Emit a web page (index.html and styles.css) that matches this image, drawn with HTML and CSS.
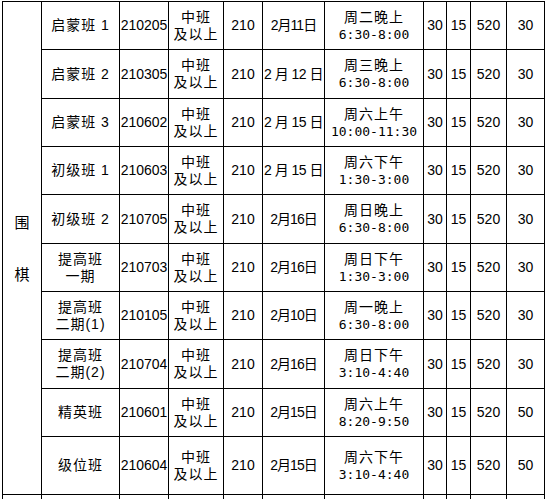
FILE: index.html
```html
<!DOCTYPE html>
<html lang="zh-CN">
<head>
<meta charset="utf-8">
<title>围棋课程</title>
<link rel="stylesheet" href="styles.css">
</head>
<body>
<table class="sched">
  <colgroup>
    <col class="c1"><col class="c2"><col class="c3"><col class="c4"><col class="c5"><col class="c6"><col class="c7"><col class="c8"><col class="c9"><col class="c10"><col class="c11">
  </colgroup>
  <tbody>
    <tr class="h48">
      <td rowspan="10" class="subj">围<br>棋</td>
      <td class="cn">启蒙班 1</td><td>210205</td><td class="cn">中班<br>及以上</td><td>210</td><td class="dt">2月11日</td><td class="tm"><span class="cn">周二晚上</span><br><span class="mono">6:30-8:00</span></td><td>30</td><td>15</td><td>520</td><td>30</td>
    </tr>
    <tr class="h49">
      <td class="cn">启蒙班 2</td><td>210305</td><td class="cn">中班<br>及以上</td><td>210</td><td class="dts">2 月 12 日</td><td class="tm"><span class="cn">周三晚上</span><br><span class="mono">6:30-8:00</span></td><td>30</td><td>15</td><td>520</td><td>30</td>
    </tr>
    <tr class="h48">
      <td class="cn">启蒙班 3</td><td>210602</td><td class="cn">中班<br>及以上</td><td>210</td><td class="dts">2 月 15 日</td><td class="tm"><span class="cn">周六上午</span><br><span class="mono">10:00-11:30</span></td><td>30</td><td>15</td><td>520</td><td>30</td>
    </tr>
    <tr class="h48">
      <td class="cn">初级班 1</td><td>210603</td><td class="cn">中班<br>及以上</td><td>210</td><td class="dts">2 月 15 日</td><td class="tm"><span class="cn">周六下午</span><br><span class="mono">1:30-3:00</span></td><td>30</td><td>15</td><td>520</td><td>30</td>
    </tr>
    <tr class="h49">
      <td class="cn">初级班 2</td><td>210705</td><td class="cn">中班<br>及以上</td><td>210</td><td class="dt">2月16日</td><td class="tm"><span class="cn">周日晚上</span><br><span class="mono">6:30-8:00</span></td><td>30</td><td>15</td><td>520</td><td>30</td>
    </tr>
    <tr class="h48">
      <td class="cn">提高班<br>一期</td><td>210703</td><td class="cn">中班<br>及以上</td><td>210</td><td class="dt">2月16日</td><td class="tm"><span class="cn">周日下午</span><br><span class="mono">1:30-3:00</span></td><td>30</td><td>15</td><td>520</td><td>30</td>
    </tr>
    <tr class="h48">
      <td class="cn">提高班<br>二期(1)</td><td>210105</td><td class="cn">中班<br>及以上</td><td>210</td><td class="dt">2月10日</td><td class="tm"><span class="cn">周一晚上</span><br><span class="mono">6:30-8:00</span></td><td>30</td><td>15</td><td>520</td><td>30</td>
    </tr>
    <tr class="h49">
      <td class="cn">提高班<br>二期(2)</td><td>210704</td><td class="cn">中班<br>及以上</td><td>210</td><td class="dt">2月16日</td><td class="tm"><span class="cn">周日下午</span><br><span class="mono">3:10-4:40</span></td><td>30</td><td>15</td><td>520</td><td>30</td>
    </tr>
    <tr class="h48">
      <td class="cn">精英班</td><td>210601</td><td class="cn">中班<br>及以上</td><td>210</td><td class="dt">2月15日</td><td class="tm"><span class="cn">周六上午</span><br><span class="mono">8:20-9:50</span></td><td>30</td><td>15</td><td>520</td><td>50</td>
    </tr>
    <tr class="h58">
      <td class="cn">级位班</td><td>210604</td><td class="cn">中班<br>及以上</td><td>210</td><td class="dt">2月15日</td><td class="tm"><span class="cn">周六下午</span><br><span class="mono">3:10-4:40</span></td><td>30</td><td>15</td><td>520</td><td>50</td>
    </tr>
    <tr class="h48">
      <td></td><td></td><td></td><td></td><td></td><td></td><td></td><td></td><td></td><td></td><td></td>
    </tr>
  </tbody>
</table>
</body>
</html>
```

FILE: styles.css
```css
html, body {
  margin: 0;
  padding: 0;
  background: #ffffff;
}

.sched {
  margin: 1px 0 0 2px;
  border-collapse: collapse;
  table-layout: fixed;
  width: 543px;
  font-family: "Liberation Sans", "Noto Sans CJK SC", sans-serif;
  font-size: 14px;
  color: #000000;
}

.c1 { width: 39px; }
.c2 { width: 78px; }
.c3 { width: 49px; }
.c4 { width: 55px; }
.c5 { width: 39px; }
.c6 { width: 62px; }
.c7 { width: 99px; }
.c8 { width: 23px; }
.c9 { width: 24px; }
.c10 { width: 36px; }
.c11 { width: 38px; }

.sched td {
  border: 1px solid #000000;
  padding: 0;
  text-align: center;
  vertical-align: middle;
  line-height: 17px;
  white-space: nowrap;
  overflow: hidden;
}

.h48 { height: 48px; }
.h49 { height: 49px; }
.h58 { height: 58px; }

.sched td.subj {
  line-height: 52px;
  font-family: "Noto Sans CJK SC", sans-serif;
  font-size: 15px;
}

.cn {
  font-family: "Liberation Sans", "Noto Sans CJK SC", sans-serif;
  letter-spacing: 1px;
}

.dt {
  letter-spacing: -1px;
}

.dts {
  letter-spacing: -0.5px;
}

.mono {
  font-family: "DejaVu Sans Mono", monospace;
  font-size: 13px;
}
```
